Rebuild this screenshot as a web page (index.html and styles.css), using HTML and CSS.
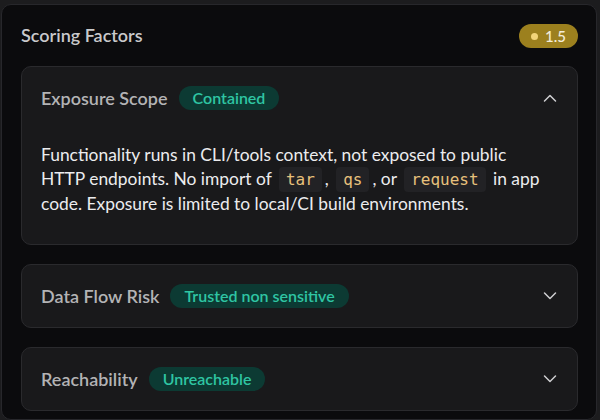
FILE: index.html
```html
<!DOCTYPE html>
<html>
<head>
<meta charset="utf-8">
<link rel="stylesheet" href="styles.css">
</head>
<body>
<div class="panel">
  <div class="panel-head">
    <h2 class="panel-title">Scoring Factors</h2>
    <span class="score"><span class="score-dot"></span>1.5</span>
  </div>
  <div class="cards">
    <section class="card">
      <div class="card-head">
        <span class="card-title">Exposure Scope</span>
        <span class="pill">Contained</span>
        <svg class="chev" width="14" height="14" viewBox="0 0 14 14"><path d="M1.5 10 L7 4.5 L12.5 10" fill="none" stroke="#cfcfd2" stroke-width="1.5" stroke-linecap="round" stroke-linejoin="round"/></svg>
      </div>
      <p class="card-body">Functionality runs in CLI/tools context, not exposed to public HTTP endpoints. No import of <code>tar</code>, <code>qs</code>, or <code>request</code> in app code. Exposure is limited to local/CI build environments.</p>
    </section>
    <section class="card">
      <div class="card-head">
        <span class="card-title">Data Flow Risk</span>
        <span class="pill">Trusted non sensitive</span>
        <svg class="chev" width="14" height="14" viewBox="0 0 14 14"><path d="M1.5 4 L7 9.5 L12.5 4" fill="none" stroke="#cfcfd2" stroke-width="1.5" stroke-linecap="round" stroke-linejoin="round"/></svg>
      </div>
    </section>
    <section class="card">
      <div class="card-head">
        <span class="card-title">Reachability</span>
        <span class="pill">Unreachable</span>
        <svg class="chev" width="14" height="14" viewBox="0 0 14 14"><path d="M1.5 4 L7 9.5 L12.5 4" fill="none" stroke="#cfcfd2" stroke-width="1.5" stroke-linecap="round" stroke-linejoin="round"/></svg>
      </div>
    </section>
  </div>
</div>
</body>
</html>
```
FILE: styles.css
```css
html, body {
  margin: 0;
  padding: 0;
  background: #1c1c1e;
  height: 420px;
  overflow: hidden;
}
body {
  padding: 4px 3px 0 1px;
  box-sizing: border-box;
  font-family: Lato, "Noto Sans", sans-serif;
}
.panel {
  background: #0b0b0d;
  border: 1px solid #27272b;
  border-radius: 10px;
  height: 416px;
  box-sizing: border-box;
  padding: 0 18px 0 19px;
}
.panel-head {
  display: flex;
  align-items: center;
  justify-content: space-between;
  height: 61px;
}
.panel-title {
  margin: 0;
  font-size: 18px;
  font-weight: 600;
  color: #c9c9cb;
  margin-top: -1px;
}
.score {
  display: flex;
  align-items: center;
  gap: 7px;
  height: 24px;
  padding: 0 12px 0 12px;
  border-radius: 12px;
  background: #9c801e;
  color: #f3ecd8;
  font-size: 15px;
  font-weight: 500;
  margin-top: 1px;
}
.score-dot {
  width: 7px;
  height: 7px;
  border-radius: 50%;
  background: #f2d479;
}
.cards {
  display: flex;
  flex-direction: column;
  gap: 19px;
}
.card {
  background: #19191b;
  border: 1px solid #2a2a2d;
  border-radius: 10px;
}
.card-head {
  display: flex;
  align-items: center;
  height: 62px;
  padding: 0 20px 0 19px;
}
.card-title {
  font-size: 18px;
  font-weight: 600;
  color: #b3b3b5;
}
.pill {
  margin-left: 11px;
  height: 24px;
  line-height: 24px;
  padding: 0 14px;
  border-radius: 12px;
  background: #0c3a33;
  color: #2fc5a3;
  font-size: 16px;
  font-weight: 600;
}
.chev {
  margin-left: auto;
}
.card-body {
  margin: 0;
  padding: 14px 30px 28px 19px;
  font-size: 17.4px;
  line-height: 24px;
  color: #ececee;
}
code {
  font-family: "DejaVu Sans Mono", monospace;
  font-size: 16px;
  color: #e7c07c;
  background: #222225;
  border-radius: 4px;
  padding: 3px 7px;
  margin: 0 3px;
}
```
